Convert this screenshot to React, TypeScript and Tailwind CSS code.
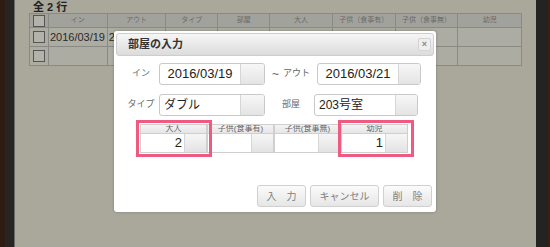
import React from "react";

const jp = "font-['Liberation_Sans','Noto_Sans_CJK_JP',sans-serif]";

const cols = [
  { label: "", w: "w-[19px]" },
  { label: "イン", w: "w-[59px]" },
  { label: "アウト", w: "w-[59px]" },
  { label: "タイプ", w: "w-[52px]" },
  { label: "部屋", w: "w-[52px]" },
  { label: "大人", w: "w-[63px]" },
  { label: "子供（食事有）", w: "w-[63px]" },
  { label: "子供（食事無）", w: "w-[63px]" },
  { label: "幼児", w: "w-[63px]" },
];

const rows = [
  ["", "2016/03/19", "2016/03/21", "ダブル", "203号室", "", "", "", ""],
  ["", "", "", "", "", "", "", "", ""],
];

function Checkbox() {
  return <div className="w-[12px] h-[12px] border border-[#555] bg-[#b4b3ab]" />;
}

function Field({ value, align = "center", text = "w-[80px]", btn = "w-[24px]" }: { value: string; align?: "center" | "left"; text?: string; btn?: string }) {
  return (
    <div className="flex h-[22px] border border-[#c9c9c9] rounded-[3px] overflow-hidden bg-white">
      <div className={`${text} flex items-center text-[#222] ${align === "center" ? "justify-center text-[13px]" : "pl-[4px] text-[12px]"}`}>{value}</div>
      <div className={`${btn} border-l border-[#d6d6d6] bg-gradient-to-b from-[#f7f7f7] to-[#e4e4e4]`} />
    </div>
  );
}

function GridCell({ label, value }: { label: string; value: string }) {
  return (
    <div className="w-[67px] flex flex-col">
      <div className="h-[10px] border border-[#cfcfcf] bg-gradient-to-b from-[#f4f4f4] to-[#e6e6e6] text-[8px] leading-[8px] text-[#666] text-center whitespace-nowrap overflow-hidden">
        {label}
      </div>
      <div className="flex h-[19px] border-x border-b border-[#cfcfcf]">
        <div className="w-[43px] bg-white flex items-center justify-end pr-[2px] text-[13px] text-[#222]">{value}</div>
        <div className="flex-1 border-l border-[#d6d6d6] bg-gradient-to-b from-[#f6f6f6] to-[#e3e3e3]" />
      </div>
    </div>
  );
}

function Btn({ label, w }: { label: string; w: string }) {
  return (
    <div className={`${w} h-[22px] flex items-center justify-center border border-[#d0d0d0] rounded-[3px] bg-gradient-to-b from-[#fbfbfb] to-[#e6e6e6] text-[10px] text-[#808080] whitespace-pre`}>
      {label}
    </div>
  );
}

export default function App() {
  return (
    <div className={`w-[550px] h-[247px] flex overflow-hidden ${jp}`}>
      <div className="w-[5px] bg-[#2e1b12]" />
      <div className="w-[9px] bg-[#262524]" />
      <div className="w-[1px] bg-[#6a6a66]" />
      <div className="relative flex-1 bg-[#a9a89b]">
        <div className="pl-[18px] pt-[2px] h-[14px] text-[11px] leading-[11px] font-bold text-[#222]">全 2 行</div>
        <div className="ml-[14px] w-[493px] border border-[#8a8a85] mt-[-1px]">
          <div className="flex h-[13px] bg-[#a2a29d]">
            {cols.map((c, i) => (
              <div key={i} className={`${c.w} ${i < cols.length - 1 ? "border-r border-[#8a8a85]" : ""} flex items-center justify-center text-[7px] text-[#6a6a66] whitespace-nowrap`}>
                {i === 0 ? <Checkbox /> : c.label}
              </div>
            ))}
          </div>
          {rows.map((r, ri) => (
            <div key={ri} className="flex h-[19px] border-t border-[#8a8a85] bg-[#adaca3]">
              {r.map((v, i) => (
                <div key={i} className={`${cols[i].w} ${i < cols.length - 1 ? "border-r border-[#8a8a85]" : ""} flex items-center ${i === 0 ? "justify-center" : "pl-[1px]"} text-[11px] text-[#2a2a2a] whitespace-nowrap overflow-hidden`}>
                  {i === 0 ? <Checkbox /> : v}
                </div>
              ))}
            </div>
          ))}
        </div>

        <div className="absolute left-[99px] top-[31px] w-[322px] h-[181px] bg-white rounded-[3px] p-[2px] shadow-[0_0_3px_rgba(0,0,0,0.25)]">
          <div className="relative h-[23px] flex items-center pl-[11px] border border-[#cdcdcd] rounded-[3px] bg-gradient-to-b from-[#f6f6f6] to-[#dcdcdc] text-[11px] font-bold text-[#333]">
            部屋の入力
            <div className="absolute right-[2px] top-[4px] w-[13px] h-[13px] border border-[#d4d4d4] rounded-[2px] bg-[#eeeeee] flex items-center justify-center text-[9px] leading-none text-[#888] font-bold">×</div>
          </div>

          <div className="flex items-center mt-[7px]">
            <div className="w-[40px] pl-[10px] text-[9px] text-[#666] text-center">イン</div>
            <div className="ml-[3px]"><Field value="2016/03/19" /></div>
            <div className="w-[52px] flex items-center text-[9px] text-[#666]">
              <span className="ml-[7px] text-[12px]">~</span>
              <span className="ml-[4px]">アウト</span>
            </div>
            <Field value="2016/03/21" btn="w-[22px]" />
          </div>

          <div className="flex items-center mt-[9px]">
            <div className="w-[40px] pl-[10px] text-[9px] text-[#666] text-center">タイプ</div>
            <div className="ml-[3px]"><Field value="ダブル" align="left" /></div>
            <div className="w-[49px] pl-[17px] text-[9px] text-[#666]">部屋</div>
            <Field value="203号室" align="left" text="w-[80px]" btn="w-[22px]" />
          </div>

          <div className="relative flex ml-[24px] mt-[8px]">
            <GridCell label="大人" value="2" />
            <GridCell label="子供(食事有)" value="" />
            <GridCell label="子供(食事無)" value="" />
            <GridCell label="幼児" value="1" />
            <div className="absolute left-[-4px] top-[-4px] w-[76px] h-[37px] border-[3px] border-[#ef5a80]" />
            <div className="absolute left-[198px] top-[-4px] w-[76px] h-[37px] border-[3px] border-[#ef5a80]" />
          </div>

          <div className="flex justify-end gap-[4px] mt-[32px] pr-[2px]">
            <Btn label="入　力" w="w-[49px]" />
            <Btn label="キャンセル" w="w-[69px]" />
            <Btn label="削　除" w="w-[49px]" />
          </div>
        </div>
      </div>
      <div className="w-[12px] bg-[#232322]" />
      <div className="w-[2px] bg-[#3a1e12]" />
    </div>
  );
}
